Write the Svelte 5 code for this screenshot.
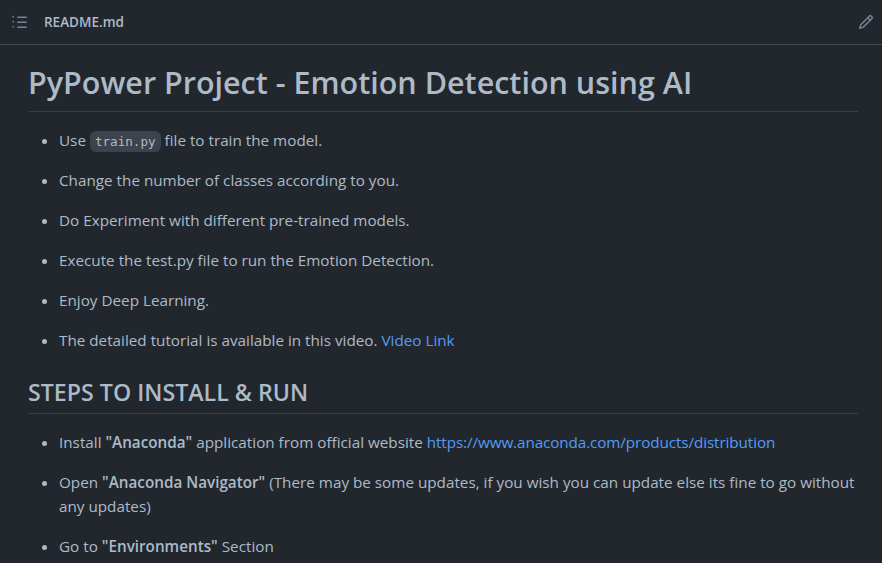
<script>
    const anacondaUrl = "https://www.anaconda.com/products/distribution";
</script>

<div class="box">
    <header class="box-header">
        <div class="file-name">
            <svg class="icon" width="16" height="16" viewBox="0 0 16 16" fill="currentColor">
                <path d="M2 2.75a1 1 0 1 1-2 0 1 1 0 0 1 2 0Zm0 5a1 1 0 1 1-2 0 1 1 0 0 1 2 0Zm0 5a1 1 0 1 1-2 0 1 1 0 0 1 2 0Z" transform="translate(0.4 0) scale(0.8 1)" />
                <path d="M5.75 2.5h8.5a.75.75 0 0 1 0 1.5h-8.5a.75.75 0 0 1 0-1.5Zm0 5h8.5a.75.75 0 0 1 0 1.5h-8.5a.75.75 0 0 1 0-1.5Zm0 5h8.5a.75.75 0 0 1 0 1.5h-8.5a.75.75 0 0 1 0-1.5Z" />
            </svg>
            <span class="title">README.md</span>
        </div>
        <svg class="icon" width="16" height="16" viewBox="0 0 16 16" fill="currentColor">
            <path d="M11.013 1.427a1.75 1.75 0 0 1 2.474 0l1.086 1.086a1.75 1.75 0 0 1 0 2.474l-8.61 8.61c-.21.21-.47.364-.756.445l-3.251.93a.75.75 0 0 1-.927-.928l.929-3.25c.081-.286.235-.547.445-.758l8.61-8.61Zm.176 4.823L9.75 4.81l-6.286 6.287a.253.253 0 0 0-.064.108l-.558 1.953 1.953-.558a.253.253 0 0 0 .108-.064Zm1.238-3.763a.25.25 0 0 0-.354 0L10.811 3.75l1.439 1.44 1.263-1.263a.25.25 0 0 0 0-.354Z" />
        </svg>
    </header>

    <article class="markdown">
        <h1>PyPower Project - Emotion Detection using AI</h1>
        <ul>
            <li>Use <code>train.py</code> file to train the model.</li>
            <li>Change the number of classes according to you.</li>
            <li>Do Experiment with different pre-trained models.</li>
            <li>Execute the test.py file to run the Emotion Detection.</li>
            <li>Enjoy Deep Learning.</li>
            <li>The detailed tutorial is available in this video. <a href="#video">Video Link</a></li>
        </ul>

        <h2>STEPS TO INSTALL &amp; RUN</h2>
        <ul>
            <li>Install <strong>"Anaconda"</strong> application from official website <a class="url" href={anacondaUrl}>{anacondaUrl}</a></li>
            <li>Open <strong>"Anaconda Navigator"</strong> (There may be some updates, if you wish you can update else its fine to go without any updates)</li>
            <li>Go to <strong>"Environments"</strong> Section</li>
        </ul>
    </article>
</div>

<style>
    :global(body) {
        margin: 0;
        background: #22272e;
        overflow: hidden;
    }

    .box {
        height: 563px;
        overflow: hidden;
        color: #adbac7;
        font-family: "Open Sans", "Noto Sans", sans-serif;
        font-size: 16px;
        line-height: 24px;
    }

    .box-header {
        height: 44px;
        display: flex;
        align-items: center;
        justify-content: space-between;
        padding: 0 8px 0 12px;
        border-bottom: 1px solid #444c56;
        color: #768390;
    }

    .file-name {
        display: flex;
        align-items: center;
    }

    .icon {
        display: block;
    }

    .title {
        margin-left: 16px;
        font-size: 13.5px;
        font-weight: 600;
        color: #adbac7;
    }

    .markdown {
        padding: 17px 24px 0 28px;
    }

    h1 {
        margin: 0 0 16px;
        padding-bottom: 9px;
        font-size: 30.5px;
        line-height: 40px;
        font-weight: 600;
        border-bottom: 1px solid #373e47;
    }

    h2 {
        margin: 25px 0 16px;
        padding-bottom: 6px;
        font-size: 23.2px;
        line-height: 30px;
        font-weight: 600;
        border-bottom: 1px solid #373e47;
    }

    ul {
        margin: 0;
        padding-left: 31px;
    }

    li {
        margin-bottom: 16px;
        font-size: 15.25px;
    }

    strong {
        font-weight: 600;
    }

    a {
        color: #539bf5;
        text-decoration: none;
    }

    .url {
        letter-spacing: -0.1px;
    }

    code {
        padding: 3px 5px;
        border-radius: 6px;
        background: rgba(99, 110, 123, 0.4);
        font-family: "DejaVu Sans Mono", "Liberation Mono", monospace;
        font-size: 12.6px;
        line-height: 1;
    }
</style>
